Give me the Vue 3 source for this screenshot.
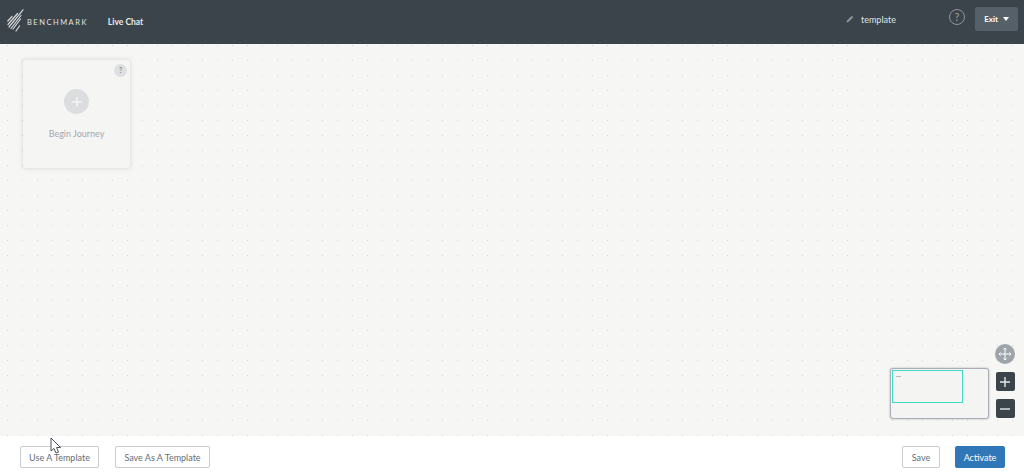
<template>
  <div class="page">
    <header class="topbar">
      <div class="brand">
        <svg class="logo" width="17" height="23" viewBox="0 0 17 23">
          <g stroke="#d5d8da" stroke-width="1.200" stroke-linecap="round">
            <path d="M0.800 12 L5 7.500" />
            <path d="M1 15.500 L10.500 4.500" />
            <path d="M2 18 L16 0.800" />
            <path d="M4 19.500 L14 6.500" />
            <path d="M6 20 L13.500 10" />
            <path d="M9 22 L12.500 17" />
          </g>
        </svg>
        <span class="brand-name">BENCHMARK</span>
      </div>
      <span class="product">Live Chat</span>

      <div class="top-right">
        <svg class="pencil" width="8" height="8" viewBox="0 0 8 8">
          <path d="M0.500 7.500 L1 5.500 L5.800 0.700 L7.300 2.200 L2.500 7 Z" fill="#8b9196" />
        </svg>
        <span class="doc-name">template</span>
        <span class="help">?</span>
        <button class="exit">Exit <i class="caret"></i></button>
      </div>
    </header>

    <main class="canvas">
      <div class="node">
        <span class="node-help">?</span>
        <span class="node-add">
          <svg width="10" height="10" viewBox="0 0 10 10">
            <path d="M5 0 V10 M0 5 H10" stroke="#fff" stroke-width="1" />
          </svg>
        </span>
        <span class="node-label">Begin Journey</span>
      </div>

      <div class="minimap">
        <div class="viewport">
          <span class="mini-node"></span>
        </div>
      </div>

      <div class="zoom-tools">
        <span class="move">
          <svg width="14" height="14" viewBox="0 0 14 14">
            <path
              d="M7 1 V13 M1 7 H13 M5.500 2.500 L7 1 L8.500 2.500 M5.500 11.500 L7 13 L8.500 11.500 M2.500 5.500 L1 7 L2.500 8.500 M11.500 5.500 L13 7 L11.500 8.500"
              stroke="#fff"
              stroke-width="1"
              fill="none"
            />
          </svg>
        </span>
        <button class="zoom-btn">
          <svg width="10" height="10" viewBox="0 0 10 10">
            <path d="M5 0 V10 M0 5 H10" stroke="#e6e8ea" stroke-width="1.400" />
          </svg>
        </button>
        <button class="zoom-btn">
          <svg width="10" height="10" viewBox="0 0 10 10">
            <path d="M0 5 H10" stroke="#e6e8ea" stroke-width="1.400" />
          </svg>
        </button>
      </div>
    </main>

    <footer class="bottombar">
      <button class="btn use">Use A Template</button>
      <button class="btn save-as">Save As A Template</button>
      <span class="spacer"></span>
      <button class="btn save">Save</button>
      <button class="btn primary">Activate</button>

      <svg class="cursor" width="12" height="18" viewBox="0 0 12 18">
        <path
          d="M1 1 V14 L4 11.500 L6 16 L8.500 15 L6.500 10.500 L10.500 10.500 Z"
          fill="#fff"
          stroke="#4a4f54"
          stroke-width="1"
        />
      </svg>
    </footer>
  </div>
</template>

<script setup>
</script>

<style>
html, body {
  margin: 0;
  background: #fff;
}
</style>

<style scoped>
.page {
  width: 1024px;
  height: 472px;
  display: flex;
  flex-direction: column;
  overflow: hidden;
  font-family: "Lato", "Open Sans", sans-serif;
}

/* top bar */
.topbar {
  height: 44px;
  flex: none;
  display: flex;
  align-items: center;
  background: #3c444b;
  color: #fff;
}
.brand {
  display: flex;
  align-items: center;
  margin-left: 7px;
}
.logo {
  display: block;
  margin-bottom: 3px;
}
.brand-name {
  margin-left: 3px;
  font-size: 7.500px;
  letter-spacing: 1.500px;
  color: #dfe1e3;
}
.product {
  margin-left: 20px;
  font-size: 8.500px;
  font-weight: 700;
  color: #e6e8ea;
}
.top-right {
  margin-left: auto;
  display: flex;
  align-items: center;
  padding: 0 6px 6px 0;
}
.doc-name {
  margin-left: 7px;
  width: 88px;
  font-size: 9px;
  color: #dfe3e6;
}
.help {
  width: 14px;
  height: 14px;
  margin-bottom: 4px;
  border: 1px solid #8f9599;
  border-radius: 50%;
  color: #9ba0a4;
  font-size: 11px;
  line-height: 14px;
  text-align: center;
}
.exit {
  margin-left: 10px;
  width: 43px;
  height: 24px;
  padding: 0;
  border: none;
  border-radius: 2px;
  background: #566069;
  color: #fff;
  font-family: inherit;
  font-size: 8px;
  font-weight: 700;
}
.caret {
  display: inline-block;
  margin-left: 3px;
  vertical-align: 1px;
  border-left: 3px solid transparent;
  border-right: 3px solid transparent;
  border-top: 4px solid #fff;
}

/* canvas */
.canvas {
  position: relative;
  flex: 1;
  background-color: #f6f6f4;
  background-image: radial-gradient(circle at 7.500px 1.500px, #d6d6d4 0.700px, transparent 1px);
  background-size: 15px 15px;
}
.node {
  position: absolute;
  left: 23px;
  top: 16px;
  width: 107px;
  height: 108px;
  display: flex;
  flex-direction: column;
  align-items: center;
  background: #f5f5f4;
  border-radius: 3px;
  box-shadow: 0 0 4px rgba(120, 125, 135, 0.3);
}
.node-help {
  position: absolute;
  top: 4px;
  right: 3px;
  width: 13px;
  height: 13px;
  border-radius: 50%;
  background: #dedfe0;
  color: #777;
  font-size: 7px;
  line-height: 13px;
  text-align: center;
}
.node-add {
  margin-top: 29px;
  width: 25px;
  height: 25px;
  border-radius: 50%;
  background: #dcdddf;
  display: flex;
  align-items: center;
  justify-content: center;
}
.node-label {
  margin-top: 14px;
  font-size: 9px;
  color: #a3a7ad;
}

/* minimap */
.minimap {
  position: absolute;
  left: 890px;
  top: 324px;
  width: 99px;
  height: 51px;
  box-sizing: border-box;
  padding: 1px;
  background: #f4f4f2;
  border: 1px solid #a9aeb6;
  border-radius: 3px;
  box-shadow: 0 0 2px rgba(90, 95, 105, 0.5);
}
.viewport {
  width: 71px;
  height: 33px;
  box-sizing: border-box;
  border: 1px solid #3fd9c6;
}
.mini-node {
  display: block;
  width: 5px;
  height: 1px;
  margin: 5px 0 0 3px;
  background: #bbb;
}
.zoom-tools {
  position: absolute;
  left: 995px;
  top: 300px;
  display: flex;
  flex-direction: column;
  align-items: center;
  gap: 8px;
}
.move {
  width: 20px;
  height: 20px;
  border-radius: 50%;
  background: #9ea4aa;
  display: flex;
  align-items: center;
  justify-content: center;
}
.zoom-btn {
  width: 19px;
  height: 19px;
  padding: 0;
  border: none;
  border-radius: 2px;
  background: #3c444b;
  display: flex;
  align-items: center;
  justify-content: center;
}

/* bottom bar */
.bottombar {
  position: relative;
  height: 36px;
  flex: none;
  box-sizing: border-box;
  padding: 10px 19px 0 20px;
  display: flex;
  align-items: flex-start;
  gap: 16px;
  background: #fff;
}
.spacer {
  flex: 1;
}
.btn {
  height: 22px;
  padding: 0;
  border: 1px solid #c9cccf;
  border-radius: 2px;
  background: #fff;
  color: #666d74;
  font-family: inherit;
  font-size: 9px;
}
.use {
  width: 79px;
}
.save-as {
  width: 95px;
}
.save {
  width: 38px;
  margin-right: -1px;
}
.primary {
  width: 50px;
  border-color: #2f77b6;
  background: #2f77b6;
  color: #fff;
}
.cursor {
  position: absolute;
  left: 50px;
  top: 1px;
}
</style>
